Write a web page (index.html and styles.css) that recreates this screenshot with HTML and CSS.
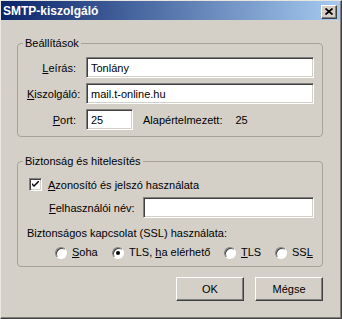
FILE: index.html
```html
<!DOCTYPE html>
<html lang="hu">
<head>
  <meta charset="UTF-8" />
  <title>SMTP-kiszolgáló</title>
  <link rel="stylesheet" href="styles.css">
</head>
<body>
  <div class="window">
    <div class="titlebar">
      <span class="title">SMTP-kiszolgáló</span>
      <span class="close">
        <svg width="8" height="7" viewBox="0 0 8 7">
          <path d="M0.5 0.5 L7.5 6.5 M7.5 0.5 L0.5 6.5" stroke="#000" stroke-width="1.7" fill="none"/>
        </svg>
      </span>
    </div>

    <div class="content">
      <fieldset class="group">
        <legend>Beállítások</legend>
        <div class="rows">
          <label class="lbl"><u>L</u>eírás:</label>
          <input class="field" type="text" value="Tonlány">
          <label class="lbl"><u>K</u>iszolgáló:</label>
          <input class="field" type="text" value="mail.t-online.hu">
          <label class="lbl"><u>P</u>ort:</label>
          <div class="port-row">
            <input class="field port" type="text" value="25">
            <span class="default-lbl">Alapértelmezett:</span>
            <span class="default-val">25</span>
          </div>
        </div>
      </fieldset>

      <fieldset class="group second">
        <legend>Biztonság és hitelesítés</legend>
        <div class="auth">
          <div class="check-row">
            <span class="checkbox">
              <svg width="7" height="7" viewBox="0 0 7 7">
                <path d="M0 2 L0 4 L2 6 L7 1 L7 -1 L2 4 Z" fill="#000"/>
              </svg>
            </span>
            <span><u>A</u>zonosító és jelszó használata</span>
          </div>
          <div class="user-row">
            <label class="user-lbl"><u>F</u>elhasználói név:</label>
            <input class="field" type="text" value="">
          </div>
          <div class="ssl-lbl">Biztonságos kapcsolat (SSL) használata:</div>
          <div class="radios">
            <label class="radio-item"><span class="radio"></span><span><u>S</u>oha</span></label>
            <label class="radio-item"><span class="radio on"></span><span>TLS, <u>h</u>a elérhető</span></label>
            <label class="radio-item"><span class="radio"></span><span><u>T</u>LS</span></label>
            <label class="radio-item"><span class="radio"></span><span>SS<u>L</u></span></label>
          </div>
        </div>
      </fieldset>

      <div class="buttons">
        <button class="btn">OK</button>
        <button class="btn">Mégse</button>
      </div>
    </div>
  </div>
</body>
</html>
```

FILE: styles.css
```css
/* ==========================================================================
   Window frame
   ========================================================================== */
* {
  box-sizing: border-box;
}
body {
  margin: 0;
  background: #d4d0c8;
  font-family: 'Liberation Sans', Arial, sans-serif;
  font-size: 11px;
  color: #000;
}
.window {
  width: 342px;
  height: 319px;
  background: #d4d0c8;
  border: 1px solid;
  border-color: #e8e6e0 #404040 #404040 #e8e6e0;
  box-shadow: inset -1px -1px #808080;
  overflow: hidden;
}
.titlebar {
  height: 19px;
  margin-right: 1px;
  display: flex;
  align-items: center;
  justify-content: space-between;
  padding: 0 3px 0 2px;
  background: linear-gradient(90deg, #0a246a, #a6caf0);
}
.title {
  color: #fff;
  font-weight: bold;
  font-size: 12px;
}
.close {
  width: 16px;
  height: 14px;
  display: flex;
  align-items: center;
  justify-content: center;
  background: #d4d0c8;
  border: 1px solid;
  border-color: #fff #404040 #404040 #fff;
  box-shadow: inset -1px -1px #808080;
  margin-top: 2px;
}

/* ==========================================================================
   Group boxes
   ========================================================================== */
.content {
  width: 340px;
  padding: 17px 18px 0 16px;
}
.group {
  margin: 0;
  padding: 0;
  min-width: 0;
  border: 1px solid #a5a296;
  border-radius: 4px;
}
.group legend {
  margin-left: 5px;
  padding: 0 2px;
  line-height: 13px;
}
.second {
  margin-top: 18px;
}
.rows {
  display: grid;
  grid-template-columns: 49px minmax(0, 1fr);
  column-gap: 10px;
  row-gap: 5px;
  align-items: center;
  padding: 7px 8px 6px 9px;
}
.lbl {
  text-align: right;
}
.field {
  height: 21px;
  width: 100%;
  margin: 0;
  padding: 0 4px;
  font-family: inherit;
  font-size: 11px;
  color: #000;
  background: #fff;
  border: 1px solid;
  border-color: #808080 #fff #fff #808080;
  box-shadow: inset 1px 1px #404040, inset -1px -1px #d4d0c8;
  outline: none;
}
.port-row {
  display: flex;
  align-items: center;
}
.field.port {
  flex: none;
  width: 47px;
}
.default-lbl {
  margin-left: 10px;
}
.default-val {
  margin-left: 13px;
}

/* ==========================================================================
   Authentication
   ========================================================================== */
.auth {
  padding: 9px 8px 7px 9px;
}
.check-row {
  display: flex;
  align-items: center;
  gap: 6px;
  padding-left: 2px;
  height: 15px;
}
.checkbox {
  width: 13px;
  height: 13px;
  display: flex;
  align-items: center;
  justify-content: center;
  background: #fff;
  border: 1px solid;
  border-color: #808080 #fff #fff #808080;
  box-shadow: inset 1px 1px #404040, inset -1px -1px #d4d0c8;
}
.user-row {
  display: flex;
  align-items: center;
  margin-top: 5px;
  padding-left: 22px;
}
.user-lbl {
  flex: none;
  width: 94px;
}
.user-row .field {
  flex: 1;
  min-width: 0;
}
.ssl-lbl {
  margin-top: 9px;
  line-height: 13px;
}
.radios {
  display: grid;
  grid-template-columns: 57px 112px 51px auto;
  margin-top: 6px;
  padding-left: 28px;
  white-space: nowrap;
}
.radio-item {
  display: flex;
  align-items: center;
  gap: 5px;
  line-height: 13px;
}
.radio {
  flex: none;
  width: 12px;
  height: 12px;
  border-radius: 50%;
  background: #fff;
  border: 1px solid;
  border-color: #808080 #fff #fff #808080;
  box-shadow: inset 1px 1px #404040;
  display: flex;
  align-items: center;
  justify-content: center;
}
.radio.on::after {
  content: "";
  width: 4px;
  height: 4px;
  border-radius: 50%;
  background: #000;
}

/* ==========================================================================
   Buttons
   ========================================================================== */
.buttons {
  display: flex;
  justify-content: flex-end;
  gap: 11px;
  margin-top: 10px;
}
.btn {
  width: 68px;
  height: 24px;
  font-family: inherit;
  font-size: 11px;
  color: #000;
  background: #d4d0c8;
  border: 1px solid;
  border-color: #fff #404040 #404040 #fff;
  box-shadow: inset -1px -1px #808080;
  padding: 0;
}
```
